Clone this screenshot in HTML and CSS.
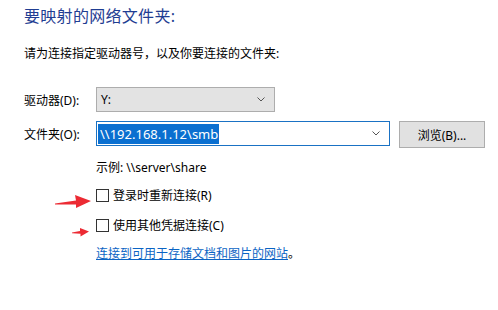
FILE: index.html
```html
<!DOCTYPE html>
<html lang="zh-CN">
<head>
    <meta charset="UTF-8">
    <title>映射网络驱动器</title>
    <link rel="stylesheet" href="styles.css">
</head>
<body>
    <div class="page">
        <h1 class="main-title">要映射的网络文件夹:</h1>
        <p class="intro">请为连接指定驱动器号，以及你要连接的文件夹:</p>

        <!-- 驱动器 -->
        <div class="form-row">
            <label class="row-label">驱动器(D):</label>
            <div class="select drive-select">
                <span>Y:</span>
                <svg class="chevron" width="8" height="5" viewBox="0 0 8 5"><path d="M0.5 0.5 L4 4 L7.5 0.5" fill="none" stroke="#555" stroke-width="1"/></svg>
            </div>
        </div>

        <!-- 文件夹 -->
        <div class="form-row">
            <label class="row-label">文件夹(O):</label>
            <div class="select folder-box">
                <span class="selected-text">\\192.168.1.12\smb</span>
                <svg class="chevron" width="8" height="5" viewBox="0 0 8 5"><path d="M0.5 0.5 L4 4 L7.5 0.5" fill="none" stroke="#555" stroke-width="1"/></svg>
            </div>
            <button class="browse-btn" type="button">浏览(B)...</button>
        </div>

        <div class="options">
            <p class="example">示例: \\server\share</p>

            <div class="check-row">
                <span class="checkbox"></span>
                <span>登录时重新连接(R)</span>
                <svg class="arrow arrow-one" width="37" height="15" viewBox="0 0 37 15"><path d="M0 9.5 L21 6.5 L20 1 L36 7 L21 14 L21 10.5 L0 10.4 Z" fill="#ec2a33"/></svg>
            </div>
            <div class="check-row">
                <span class="checkbox"></span>
                <span>使用其他凭据连接(C)</span>
                <svg class="arrow arrow-two" width="18" height="10" viewBox="0 0 18 10"><path d="M0 5.5 L8 4 L8 1 L17 4.5 L8.5 9.5 L8.5 6.7 L0 6.3 Z" fill="#ec2a33"/></svg>
            </div>

            <p class="link-line"><a href="#">连接到可用于存储文档和图片的网站</a>。</p>
        </div>
    </div>
</body>
</html>
```

FILE: styles.css
```css
body {
    margin: 0;
    background-color: #fff;
    color: #000;
    font-family: "Noto Sans", "Noto Sans CJK SC", sans-serif;
    font-size: 12px;
}
.page {
    padding: 6px 0 0 24px;
}
.main-title {
    margin: 0;
    font-size: 16px;
    font-weight: normal;
    line-height: 20px;
    color: #1f3d92;
    letter-spacing: 0.3px;
}
.intro {
    margin: 20px 0 0;
    line-height: 16px;
}
.form-row {
    display: flex;
    align-items: center;
    height: 25px;
    margin-top: 25px;
}
.form-row + .form-row {
    margin-top: 9px;
}
.row-label {
    width: 72px;
}
.select {
    box-sizing: border-box;
    height: 25px;
    display: flex;
    align-items: center;
    justify-content: space-between;
    padding: 0 9px 0 4px;
}
.drive-select {
    width: 179px;
    background-color: #e3e3e3;
    border: 1px solid #adadad;
}
.folder-box {
    width: 294px;
    background-color: #fff;
    border: 1px solid #1a72c4;
    padding-left: 1px;
}
.selected-text {
    background-color: #0a6fd0;
    color: #fff;
    font-size: 13px;
    line-height: 20px;
    padding: 0 1px 0 2px;
}
.browse-btn {
    box-sizing: border-box;
    width: 86px;
    height: 27px;
    margin: 2px 0 0 9px;
    background-color: #e1e1e1;
    border: 1px solid #adadad;
    font-family: inherit;
    font-size: 12px;
    color: #000;
    padding: 0;
}
.options {
    padding-left: 72px;
}
.example {
    margin: 14px 0 0;
    line-height: 16px;
}
.check-row {
    position: relative;
    display: flex;
    align-items: center;
    gap: 4px;
    height: 16px;
    margin-top: 11px;
}
.check-row + .check-row {
    margin-top: 14px;
}
.checkbox {
    box-sizing: border-box;
    width: 13px;
    height: 13px;
    border: 1px solid #333;
    background-color: #fff;
}
.arrow {
    position: absolute;
}
.arrow-one {
    left: -41px;
    top: 7px;
}
.arrow-two {
    left: -24px;
    top: 10px;
}
.link-line {
    margin: 13px 0 0;
    line-height: 16px;
}
.link-line a {
    color: #0b64c4;
    text-decoration: underline;
}
```
